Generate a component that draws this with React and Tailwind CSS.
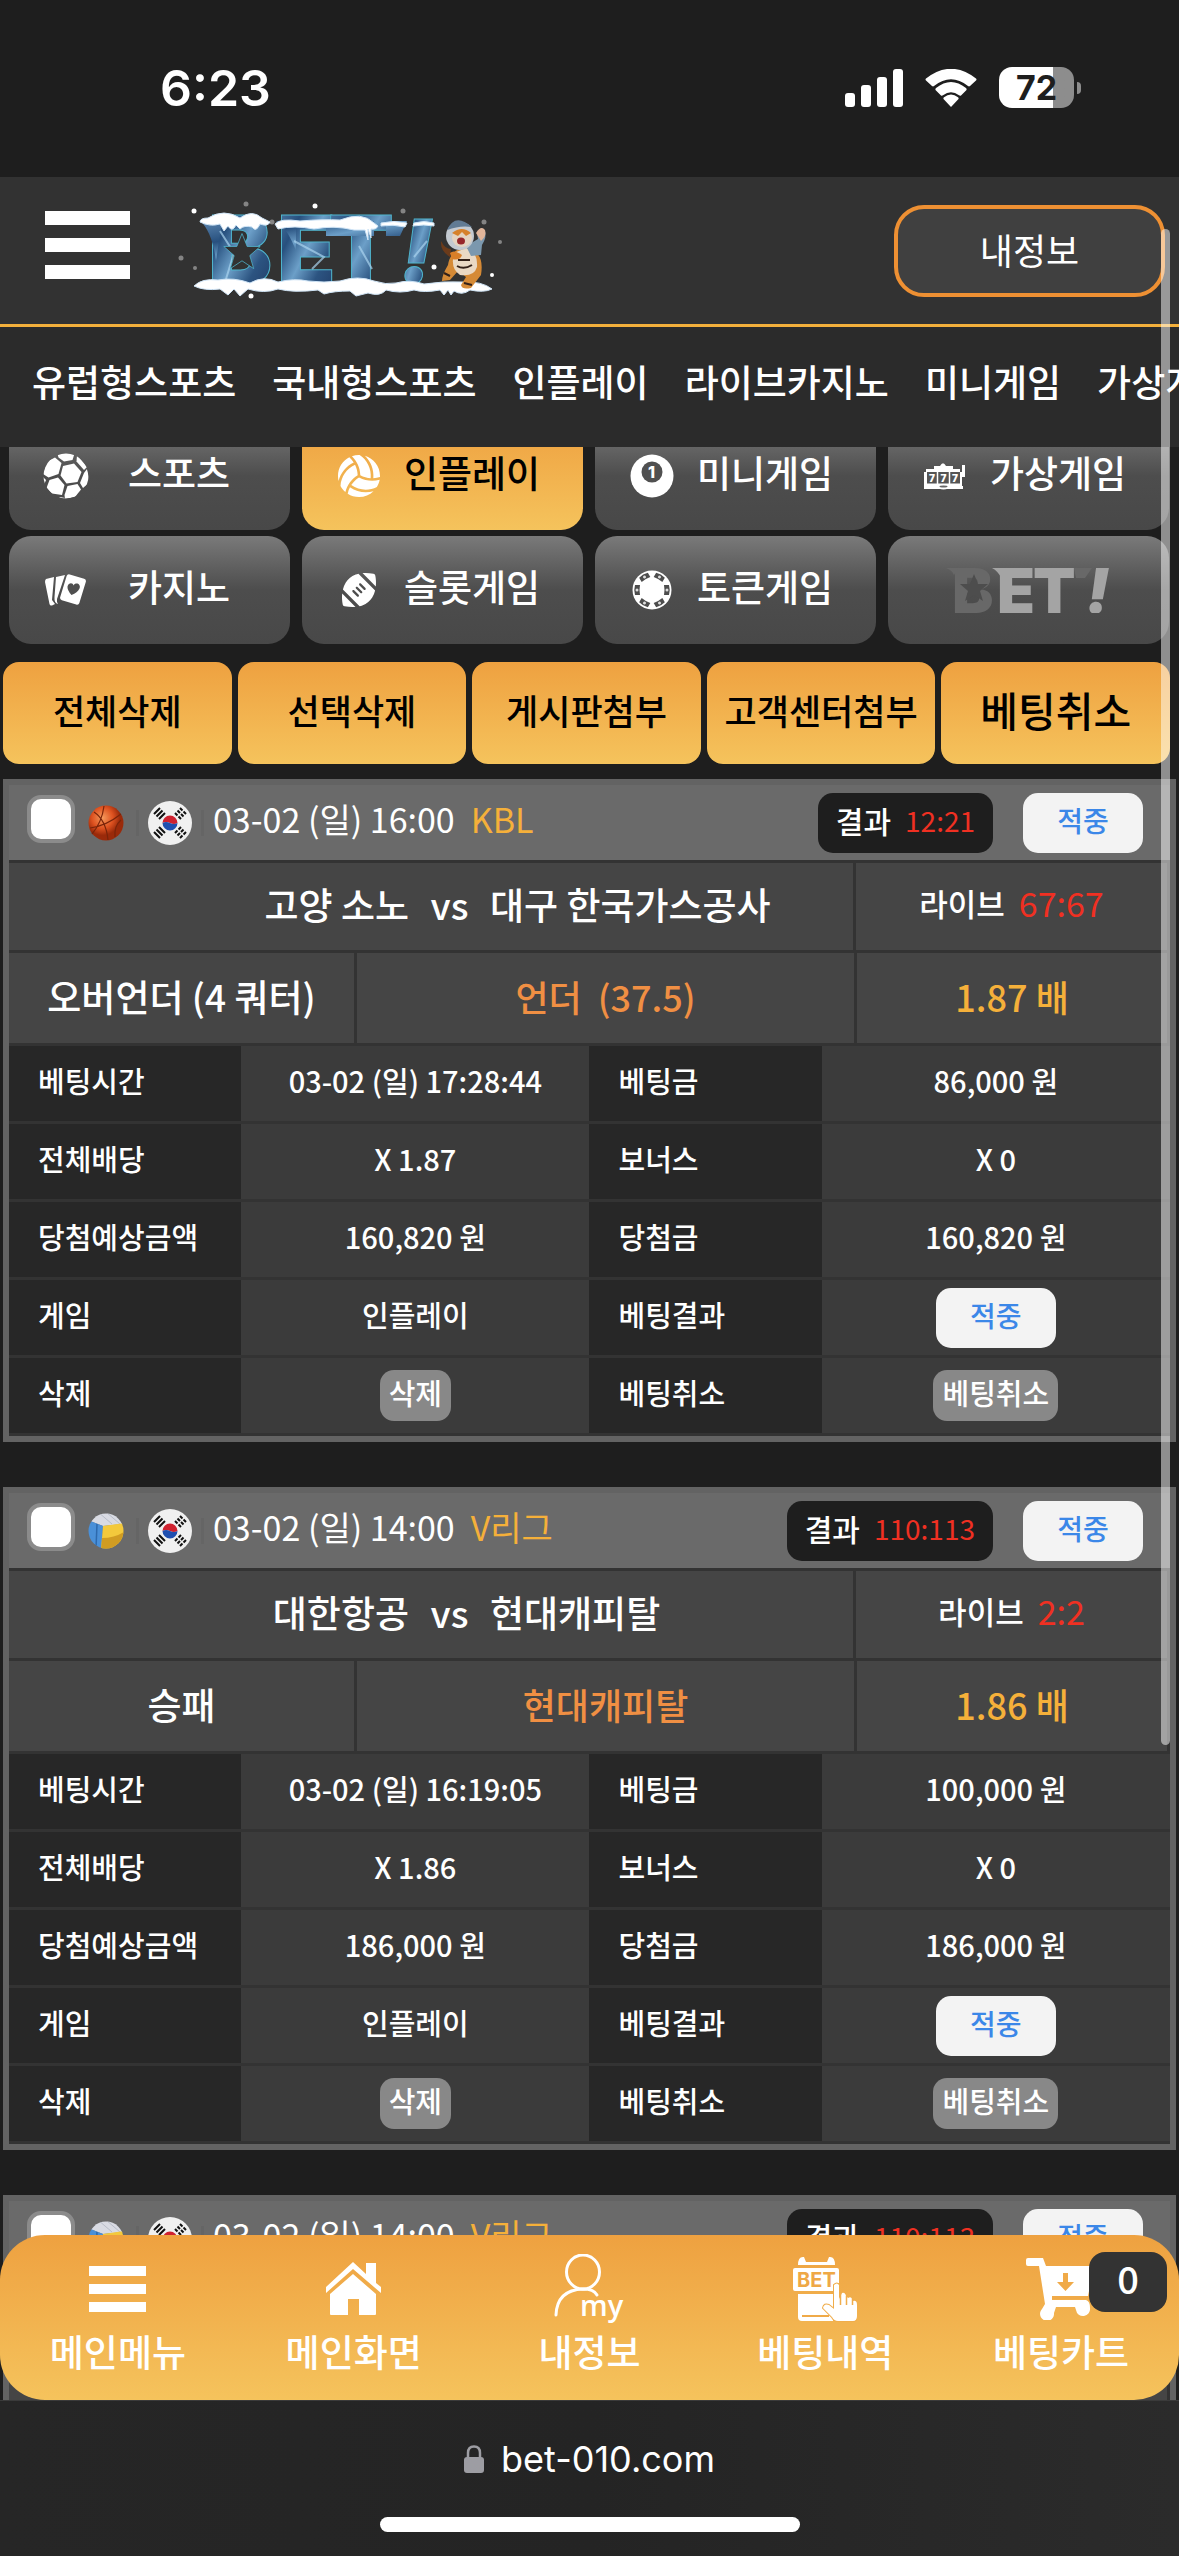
import { FaFootball, FaVolleyball } from 'react-icons/fa6'

const navLinks = ['유럽형스포츠', '국내형스포츠', '인플레이', '라이브카지노', '미니게임', '가상게임']

const actions = [
  { label: '전체삭제' },
  { label: '선택삭제' },
  { label: '게시판첨부' },
  { label: '고객센터첨부' },
  { label: '베팅취소', large: true },
]

const volleyBet = {
  sport: 'volleyball',
  date: '03-02 (일) 14:00',
  league: 'V리그',
  result: '110:113',
  home: '대한항공',
  away: '현대캐피탈',
  live: '2:2',
  market: '승패',
  pick: '현대캐피탈',
  odds: '1.86',
  betTime: '03-02 (일) 16:19:05',
  stake: '100,000 원',
  payout: '186,000 원',
}

const bets = [
  {
    id: 1,
    sport: 'basketball',
    date: '03-02 (일) 16:00',
    league: 'KBL',
    result: '12:21',
    home: '고양 소노',
    away: '대구 한국가스공사',
    live: '67:67',
    market: '오버언더 (4 쿼터)',
    pick: '언더',
    line: '(37.5)',
    odds: '1.87',
    betTime: '03-02 (일) 17:28:44',
    stake: '86,000 원',
    payout: '160,820 원',
  },
  { id: 2, ...volleyBet },
  { id: 3, ...volleyBet },
]

function SoccerIcon() {
  return (
    <svg viewBox="0 0 46 48" className="h-12 w-[46px]">
      <clipPath id="soccer">
        <circle cx="23" cy="24" r="22.5" />
      </clipPath>
      <g clipPath="url(#soccer)" fill="#fff">
        <path d="M20 14 31 11.500 38.500 20 34.500 30 23.500 31.500 17.500 23.500z" />
        <path d="M14 0H32L29.500 8 21 9.500 15.500 5.500z" />
        <path d="M34 3 44 15 41 18 33.500 9.500z" />
        <path d="M44 17 47 30 40 36 37 31 41 21z" />
        <path d="M12 5.500 18.500 11 15.500 22 5.500 25.500 0 22 3 10z" />
        <path d="M6.500 28 15 25.500 21.500 33 19 43 9 41.500 3.500 36z" />
        <path d="M24.500 34 34.500 32 38 37.500 32 45 22 47 21.500 43z" />
        <path d="M0 25 3 28 1 33-1 32z" />
        <path d="M17 45 22 46 20 49 14 47z" />
      </g>
    </svg>
  )
}

function CardsIcon() {
  return (
    <svg viewBox="0 0 42 32" className="h-8 w-[42px]" fill="#fff">
      <path d="M1 5 9 3 7 26 10 30 7 31.500Q5 32 4.500 30L0 8Q0 6 1 5z" />
      <path d="M11 3 20 1 12 25Q11.500 28 13 30Q9 29 9.500 23z" />
      <rect x="18" y="2" width="20" height="27" rx="2.500" transform="rotate(17 28 15.500)" />
      <path d="M28.500 11.500C30.500 7.500 36.500 10 34.500 14.500Q32.500 18.500 26.500 21Q22 16 22.500 12.500C23.500 8.500 28 8.500 28.500 11.500z" fill="#4f4f4f" />
    </svg>
  )
}

function BallIcon() {
  return (
    <svg viewBox="0 0 44 44" className="h-11 w-11">
      <circle cx="22" cy="22" r="21.500" fill="#fff" />
      <circle cx="22" cy="18" r="10.500" fill="#505050" />
      <text x="21.500" y="24" textAnchor="middle" className="font-['Inter',sans-serif] text-base font-extrabold" fill="#fff">1</text>
    </svg>
  )
}

function SlotIcon() {
  return (
    <svg viewBox="0 0 42 28" className="h-7 w-[42px]">
      <path d="M10 4H16Q19-1.500 22 4H29V7H36V10H38V3H41V15H38V24H39V27H0V10H2V7H10z" fill="#fff" />
      <rect x="3" y="10" width="33" height="11.500" fill="#555" />
      <path d="M13.500 10V22M25.500 10V22" stroke="#fff" strokeWidth="1.500" />
      <g className="font-['Inter',sans-serif] text-[10px] font-black" fill="#fff">
        <text x="5" y="19.500">7</text>
        <text x="16.500" y="19.500">7</text>
        <text x="28" y="19.500">7</text>
      </g>
      <ellipse cx="19.500" cy="25" rx="6" ry="2.500" fill="#fff" />
      <ellipse cx="19.500" cy="24.500" rx="4" ry="1" fill="#666" />
    </svg>
  )
}

function ChipIcon() {
  return (
    <svg viewBox="0 0 40 40" className="h-10 w-10">
      <circle cx="20" cy="20" r="19.500" fill="#fff" />
      {[0, 60, 120, 180, 240, 300].map((angle) => (
        <g key={angle} transform={`rotate(${angle} 20 20)`}>
          <path d="M32 15H37Q38.500 20 37 25H32Q33 20 32 15z" fill="#4d4d4d" />
          <circle cx="35" cy="20" r="1.500" fill="#ddd" />
        </g>
      ))}
    </svg>
  )
}

const star = '0,-15 4,-5 14,-5 6,2 9,12 0,6 -9,12 -6,2 -14,-5 -4,-5'

function GreyLogo() {
  return (
    <svg viewBox="0 0 166 46" className="h-[46px] w-[166px]" role="img" aria-label="BET!">
      <g className="font-['Inter',sans-serif] text-[62px] font-black">
        <text x="6" y="46" fill="#686868">B</text>
        <text x="51" y="46" fill="#a4a4a4">E</text>
        <text x="87" y="46" fill="#a4a4a4">T</text>
        <text x="140" y="46" fill="#a4a4a4" className="italic">!</text>
      </g>
      <path d="M0 1H12L8 8Q6 3 0 1M128 1H146L139 11H130z" fill="#686868" />
      <path d="M46 1H56V12Q52 4 46 1z" fill="#a4a4a4" />
      <polygon points={star} transform="translate(28 22)" fill="#4d4d4d" />
    </svg>
  )
}

function WinterLogo() {
  return (
    <svg viewBox="0 0 330 108" className="h-[108px] w-[330px]" role="img" aria-label="BET!">
      <defs>
        <linearGradient id="ice" x1="0" y1="0" x2="1" y2="1">
          <stop offset="0" stopColor="#5c86b0" />
          <stop offset=".3" stopColor="#27507e" />
          <stop offset=".5" stopColor="#6c9fc8" />
          <stop offset=".7" stopColor="#2c5481" />
          <stop offset="1" stopColor="#1d355f" />
        </linearGradient>
      </defs>
      <g fill="url(#ice)" stroke="#4fb3cb" strokeWidth="1" className="font-['Inter',sans-serif] text-[96px] font-black">
        <text x="34" y="94">B</text>
        <text x="103" y="94">E</text>
        <text x="154" y="94">T</text>
        <text x="226" y="92" className="text-[88px] italic">!</text>
      </g>
      <path d="M26 30H48L42 70Q38 40 26 30M102 30H122V60Q114 38 102 30M152 30H200V45H152zM212 30H233L226 45H212z" fill="url(#ice)" />
      <path d="M46 40 60 62 52 88M120 50 150 66 138 78M185 55 198 78M240 66 253 50" stroke="#a9d3ee" strokeWidth="2" fill="none" opacity=".7" />
      <polygon points={star} transform="translate(68 62) scale(1.300)" fill="#323232" stroke="#4fb3cb" strokeWidth=".6" />
      <g fill="#fff" stroke="#cfe4f6" strokeWidth="1">
        <path d="M26 31Q26 27 34 27Q50 17 66 27Q78 18 88 27L96 31Q94 36 86 33Q82 42 78 36Q70 34 66 38L62 34Q58 42 54 35L50 40L46 33Q36 36 26 31z" />
        <path d="M101 33Q106 27 126 30Q150 28 166 29Q188 20 200 32L204 35Q202 39 197 38V47L194 38V49L191 39H180Q160 34 140 38Q120 34 104 38z" />
        <path d="M207 32Q220 29 233 32L231 36Q219 33 207 35zM240 32Q250 29 260 32V35Q250 33 239 35z" />
        <path d="M20 95Q28 87 44 89Q60 86 76 92Q90 84 104 91Q120 87 134 90Q150 92 166 90Q184 84 200 90Q212 94 222 92Q236 88 250 93Q270 90 288 91Q308 90 318 98Q310 102 296 99Q288 105 280 100L277 104L274 99L270 104L266 99Q250 102 240 99Q226 103 212 99Q206 106 194 102L182 105L176 100Q160 100 150 103L144 99Q120 102 104 98Q90 103 74 98L66 105L60 98L54 104L46 98Q30 100 20 95z" />
      </g>
      {/* waving tiger in a parka */}
      <path d="M276 66Q266 60 267 50Q271 58 277 58" fill="#6b3b1b" />
      <path d="M274 74Q268 84 268 90L276 89L284 80L292 86L287 94Q288 99 297 97L307 84Q310 66 300 60L290 56Q276 60 274 74z" fill="#d58a36" />
      <path d="M280 62Q276 78 286 84Q300 86 303 76Q304 60 292 57z" fill="#ead9c4" />
      <path d="M292 55 304 48 303 42Q308 34 311 40Q313 46 308 54L307 64L297 65z" fill="#7b98ae" />
      <path d="M302 42Q307 34 311 39Q313 45 307 50z" fill="#e1b59a" />
      <circle cx="286" cy="45" r="14" fill="#c3c9d0" />
      <path d="M273 39Q281 21 298 36Q286 34 273 39z" fill="#617b94" />
      <ellipse cx="288" cy="47" rx="10" ry="9" fill="#e4d3c0" />
      <path d="M278 42Q288 34 297 42L292 45L288 41L284 45z" fill="#d6812b" />
      <ellipse cx="287" cy="50" rx="4" ry="3.500" fill="#97262a" />
      <path d="M276 62Q280 58 288 64Q286 70 278 68z" fill="#d97f28" />
      <path d="M284 69H296M283 75Q290 79 298 74M270 82L276 85M290 92L298 94" stroke="#332118" strokeWidth="2" fill="none" />
      <g fill="#fff">
        <circle cx="20" cy="20" r="2.500" />
        <circle cx="141" cy="15" r="2.500" />
        <circle cx="260" cy="76" r="2.500" />
        <circle cx="318" cy="84" r="2" />
        <circle cx="77" cy="105" r="2.500" />
        <g opacity=".4">
          <circle cx="72" cy="13" r="2.500" />
          <circle cx="229" cy="20" r="2.500" />
          <circle cx="310" cy="31" r="2.500" />
          <circle cx="98" cy="31" r="2.500" />
          <circle cx="7" cy="67" r="2.500" />
          <circle cx="326" cy="51" r="2" />
          <circle cx="21" cy="77" r="2" />
        </g>
      </g>
    </svg>
  )
}

const menuItems = [
  { label: '스포츠', icon: <SoccerIcon /> },
  { label: '인플레이', icon: <FaVolleyball size={42} />, active: true },
  { label: '미니게임', icon: <BallIcon /> },
  { label: '가상게임', icon: <SlotIcon /> },
  { label: '카지노', icon: <CardsIcon /> },
  { label: '슬롯게임', icon: <FaFootball size={36} /> },
  { label: '토큰게임', icon: <ChipIcon /> },
]

function StatusBar() {
  return (
    <div className="flex h-[177px] shrink-0 items-center justify-between pb-[2px] pl-[160px] pr-[98px] font-['Inter',sans-serif]">
      <span className="text-[50px] font-semibold leading-none">6:23</span>
      <div className="flex items-center gap-[22px]">
        <svg viewBox="0 0 58 38" className="h-[38px] w-[58px]" fill="#fff">
          <rect y="24" width="10" height="14" rx="3" />
          <rect x="16" y="16" width="10" height="22" rx="3" />
          <rect x="32" y="8" width="10" height="30" rx="3" />
          <rect x="48" width="10" height="38" rx="3" />
        </svg>
        <svg viewBox="0 0 52 38" className="h-[38px] w-[52px]" fill="#fff">
          <path d="M26 38 18.500 30Q18 29 19 28.200Q26 23 33 28.200Q34 29 33.500 30z" />
          <path d="M16 26.500 10.500 21Q10 20 11 19Q26 7 41 19Q42 20 41.500 21L36 26.500Q35 27 34 26.300Q26 20 18 26.300Q17 27 16 26.500z" />
          <path d="M7 17 1 11.500Q0 10.500 1 9.500Q26-10 51 9.500Q52 10.500 51 11.500L45 17Q44 17.800 43 17Q26 3.500 9 17Q8 17.800 7 17z" />
        </svg>
        <div className="flex items-center gap-[3px]">
          <div className="flex h-[41px] w-[75px] items-center justify-center rounded-[13px] bg-linear-to-r from-white from-72% to-[#8d8d8d] to-72% text-[34px] font-bold leading-none text-[#1e1e1e]">
            72
          </div>
          <div className="h-3 w-1 rounded-r-full bg-[#8d8d8d]" />
        </div>
      </div>
    </div>
  )
}

function Header() {
  return (
    <>
      <header className="flex h-[150px] shrink-0 items-center justify-between border-b-[3px] border-[#f3b03c] bg-[#323232] pl-[45px] pr-[14px]">
        <div className="flex items-center gap-[44px] pb-3">
          <button aria-label="메뉴" className="flex w-[85px] flex-col gap-[13px]">
            <span className="h-[14px] bg-white" />
            <span className="h-[14px] bg-white" />
            <span className="h-[14px] bg-white" />
          </button>
          <a href="#home">
            <WinterLogo />
          </a>
        </div>
        <button className="h-[92px] w-[271px] rounded-[30px] border-4 border-[#ee9033] bg-[#404040] pb-1 text-[36px] leading-none">
          내정보
        </button>
      </header>
      <nav className="flex h-[120px] shrink-0 items-center gap-9 overflow-hidden whitespace-nowrap bg-[#2b2b2b] pb-3 pl-8 text-[37px] font-medium leading-none">
        {navLinks.map((link) => (
          <a key={link} href="#category">{link}</a>
        ))}
      </nav>
    </>
  )
}

function GameMenu() {
  return (
    <div className="-mt-[25px] grid grid-cols-4 gap-x-3 gap-y-[6px] pl-[9px] pr-[10px]">
      {menuItems.map((item) => (
        <button
          key={item.label}
          className={`flex h-[108px] items-center rounded-[22px] pl-[29px] pr-[26px] text-[37px] font-medium leading-none ${
            item.active
              ? 'bg-linear-to-b from-[#eea140] to-[#f5c35c] text-black'
              : 'bg-linear-to-b from-[#7a7a7a] via-[#4d4d4d] to-[#484848]'
          }`}
        >
          <span className="flex w-14 shrink-0 justify-center text-white">{item.icon}</span>
          <span className="flex-1 whitespace-nowrap pb-2 text-center">{item.label}</span>
        </button>
      ))}
      <button className="flex h-[108px] items-center justify-center rounded-[22px] bg-linear-to-b from-[#7a7a7a] via-[#4d4d4d] to-[#484848]">
        <GreyLogo />
      </button>
    </div>
  )
}

function ActionBar() {
  return (
    <div className="mt-[18px] grid grid-cols-5 gap-[6px] pl-[3px] pr-[9px]">
      {actions.map((action) => (
        <button
          key={action.label}
          className={`h-[102px] whitespace-nowrap rounded-2xl bg-linear-to-b from-[#eea140] to-[#f5c35c] pb-2 font-medium leading-none text-black ${
            action.large ? 'text-[41px]' : 'text-[35px]'
          }`}
        >
          {action.label}
        </button>
      ))}
    </div>
  )
}

function SportBall({ sport }) {
  if (sport === 'basketball') {
    return (
      <svg viewBox="0 0 36 38" className="h-[38px] w-9">
        <radialGradient id="basket" cx=".4" cy=".35">
          <stop offset="0" stopColor="#f59a5c" />
          <stop offset=".6" stopColor="#de5220" />
          <stop offset="1" stopColor="#9a2a0a" />
        </radialGradient>
        <circle cx="18" cy="19" r="17.500" fill="url(#basket)" />
        <path d="M2 24Q18 22 33 10M6 8Q18 16 20 36M16 2Q14 18 4 30M33 16Q26 22 27 33" stroke="#7a2409" strokeWidth="1.200" fill="none" />
      </svg>
    )
  }
  return (
    <svg viewBox="0 0 36 38" className="h-[38px] w-9">
      <clipPath id="volley">
        <circle cx="18" cy="19" r="17.500" />
      </clipPath>
      <g clipPath="url(#volley)">
        <path d="M0 0H36V12L15 14 2 9z" fill="#d9dbe3" />
        <path d="M10 0 24 12M18 0 32 12" stroke="#b7bcc8" strokeWidth="1" />
        <path d="M0 8 15 14 14 38H0z" fill="#4a90d8" />
        <path d="M9 12 8 36" stroke="#2d69ad" strokeWidth="1.500" />
        <path d="M15 14 36 11V38H13z" fill="#f3c93c" />
        <path d="M14 26Q26 26 36 20V38H13z" fill="#d19c22" />
      </g>
    </svg>
  )
}

function KoreaFlag() {
  return (
    <svg viewBox="0 0 44 44" className="h-11 w-11">
      <circle cx="22" cy="22" r="22" fill="#f0f0f0" />
      <path d="M14.500 22A7.500 7.500 0 0 1 29.500 22Q26 24 22 22T14.500 22z" fill="#cf2230" />
      <path d="M14.500 22A7.500 7.500 0 0 0 29.500 22Q26 24 22 22T14.500 22z" fill="#1f4fb0" />
      <g stroke="#111" strokeWidth="2">
        <path d="M7 13 13 7M9.500 15.500 15.500 9.500M12 18 18 12" transform="translate(-1 0)" />
        <path d="M31 7 37 13M28.500 9.500 34.500 15.500M26 12 32 18" strokeDasharray="3.500 1.500" transform="translate(1 0)" />
        <path d="M7 31 13 37M9.500 28.500 15.500 34.500M12 26 18 32" transform="translate(-1 0)" />
        <path d="M31 37 37 31M28.500 34.500 34.500 28.500M26 32 32 26" strokeDasharray="3.500 1.500" transform="translate(1 0)" />
      </g>
    </svg>
  )
}

function HitBadge() {
  return (
    <span className="inline-flex h-[60px] w-[120px] items-center justify-center rounded-[15px] bg-[#f3f3f3] pb-[6px] align-middle text-[28px] font-medium leading-none text-[#3b87e8]">
      적중
    </span>
  )
}

function SmallButton({ children }) {
  return (
    <button className="inline-flex h-[51px] items-center rounded-[14px] bg-[#888] px-[9px] pb-[6px] align-middle text-[29px] font-medium leading-none">
      {children}
    </button>
  )
}

function BetCard({ bet }) {
  const rows = [
    ['베팅시간', bet.betTime, '베팅금', bet.stake],
    ['전체배당', `X ${bet.odds}`, '보너스', 'X 0'],
    ['당첨예상금액', bet.payout, '당첨금', bet.payout],
    ['게임', '인플레이', '베팅결과', <HitBadge key="hit" />],
    ['삭제', <SmallButton key="delete">삭제</SmallButton>, '베팅취소', <SmallButton key="cancel">베팅취소</SmallButton>],
  ]

  return (
    <article className="shrink-0 border-[6px] border-[#636363] bg-[#333] leading-none">
      <div className="flex h-[75px] items-center bg-[#6a6a6a] pl-[18px] pr-[27px]">
        <input
          type="checkbox"
          aria-label={`${bet.home} vs ${bet.away}`}
          className="mb-2 size-12 appearance-none rounded-[14px] border-4 border-[#8b8b8b] bg-white"
        />
        <div className="ml-[13px]"><SportBall sport={bet.sport} /></div>
        <span className="ml-3 h-[26px] w-[3px] bg-[#656565]" />
        <div className="ml-[9px]"><KoreaFlag /></div>
        <span className="ml-[9px] h-[26px] w-[3px] bg-[#656565]" />
        <div className="ml-[9px] flex gap-4 pb-2 text-[34px]">
          <span>{bet.date}</span>
          <span className="text-[#f5b03a]">{bet.league}</span>
        </div>
        <div className="ml-auto flex h-[60px] items-center gap-[14px] rounded-[15px] bg-[#1e1e1e] px-[18px] pb-[6px]">
          <span className="text-[30px] font-medium">결과</span>
          <span className="text-[28px] text-[#f03022]">{bet.result}</span>
        </div>
        <div className="ml-[30px] flex"><HitBadge /></div>
      </div>

      <div className="mt-[3px] flex h-[87px] gap-[3px] pr-[3px] text-[37px] font-medium">
        <div className="flex flex-[844] items-center bg-[#454545] pb-1">
          <span className="w-[400px] text-right">{bet.home}</span>
          <span className="w-[81px] text-center">vs</span>
          <span>{bet.away}</span>
        </div>
        <div className="flex flex-[311] items-center justify-center gap-[14px] bg-[#454545] pb-2">
          <span className="text-[31px]">라이브</span>
          <span className="text-[34px] font-normal text-[#f03022]">{bet.live}</span>
        </div>
      </div>

      <div className="mt-[3px] flex h-[90px] gap-[3px] pr-[3px] text-[37px] font-medium">
        <div className="flex flex-[345] items-center justify-center bg-[#454545] pb-1">{bet.market}</div>
        <div className="flex flex-[497] items-center justify-center gap-4 bg-[#454545] pb-1 text-[36px] text-[#f08f43]">
          <span>{bet.pick}</span>
          {bet.line && <span>{bet.line}</span>}
        </div>
        <div className="flex flex-[310] items-center justify-center bg-[#454545] pb-1 text-[36px] text-[#f5b03a]">{bet.odds} 배</div>
      </div>

      <table className="mt-[3px] w-full table-fixed border-separate border-spacing-0 text-[29px]">
        <colgroup>
          <col className="w-[20%]" />
          <col className="w-[30%]" />
          <col className="w-[20%]" />
          <col className="w-[30%]" />
        </colgroup>
        <tbody>
          {rows.map(([labelA, valueA, labelB, valueB]) => (
            <tr key={labelA} className="h-[78px]">
              <th scope="row" className="border-b-[3px] border-[#333] bg-[#272727] pb-[6px] pl-[29px] text-left font-medium">{labelA}</th>
              <td className={`border-b-[3px] border-[#333] bg-[#3b3b3b] text-center font-medium ${typeof valueA === 'string' ? 'pb-[6px]' : ''}`}>{valueA}</td>
              <th scope="row" className="border-b-[3px] border-[#333] bg-[#272727] pb-[6px] pl-[29px] text-left font-medium">{labelB}</th>
              <td className={`border-b-[3px] border-[#333] bg-[#3b3b3b] text-center font-medium ${typeof valueB === 'string' ? 'pb-[6px]' : ''}`}>{valueB}</td>
            </tr>
          ))}
        </tbody>
      </table>
    </article>
  )
}

function MenuIcon() {
  return (
    <svg viewBox="0 0 57 46" className="h-[46px] w-[57px]" fill="#fff">
      <path d="M0 0H57V10H0zM0 18H57V28H0zM0 36H57V46H0z" />
    </svg>
  )
}

function HomeIcon() {
  return (
    <svg viewBox="0 0 56 54" className="h-[54px] w-14" fill="#fff">
      <path d="M27 0 40 12V1H50V21L55 25V31L27 7 0 31V25z" />
      <path d="M27 12 50 32V52Q50 53 49 53H33V37H22V53H5Q4 53 4 52V32z" />
    </svg>
  )
}

function MyIcon() {
  return (
    <svg viewBox="0 0 70 70" className="h-[70px] w-[70px]">
      <ellipse cx="29" cy="18" rx="16.500" ry="17" stroke="#fff" strokeWidth="3" fill="none" />
      <path d="M2 61Q3 36 29 35Q40 35 43 41" stroke="#fff" strokeWidth="3" fill="none" strokeLinecap="round" />
      <text x="26" y="62" fill="#fff" className="font-['Open_Sans',sans-serif] text-[29px] font-semibold">my</text>
    </svg>
  )
}

function BetIcon() {
  return (
    <svg viewBox="0 0 64 66" className="h-[66px] w-16">
      <path d="M5 9Q5 0 11 1L13 6H34L36 1Q42 0 42 9zM2 12H44Q46 12 46 14V27L41 30V35H2Q0 35 0 33V14Q0 12 2 12zM5 38H40V65H9Q5 65 5 61z" fill="#fff" />
      <path d="M9 60H36" stroke="#f0aa48" strokeWidth="2" />
      <text x="4" y="31" fill="#efa846" className="font-['Inter',sans-serif] text-[20px] font-bold">BET</text>
      <path d="M41 29Q44 26 46 29V43L49 37Q52 36 53 40L55 42Q58 40 59 43L60 45Q64 44 64 49V60Q64 65 60 65H45Q41 65 39 61L30 52Q31 47 36 49L41 53z" fill="#fff" stroke="#f0ad4b" strokeWidth="2" paintOrder="stroke" />
      <path d="M47.500 36V49M53.500 40V49M59.500 43V49" stroke="#f0ad4b" strokeWidth="1.500" />
    </svg>
  )
}

function CartIcon() {
  return (
    <svg viewBox="0 0 70 62" className="h-[62px] w-[70px]">
      <path d="M2 0H17L20 8H68L62 38H26V42H60Q64 43 64 50A7 7 0 1 1 50 52L49 49H30L28 55A7 7 0 1 1 16 51L19 46 13 8H2Q0 8 0 6V2Q0 0 2 0z" fill="#fff" />
      <path d="M37 15H42V24H48L39.500 33 31 24H37zM26 38H64V41H26z" fill="#f0aa48" />
    </svg>
  )
}

const tabs = [
  { label: '메인메뉴', icon: <MenuIcon /> },
  { label: '메인화면', icon: <HomeIcon /> },
  { label: '내정보', icon: <MyIcon /> },
  { label: '베팅내역', icon: <BetIcon /> },
  { label: '베팅카트', icon: <CartIcon />, count: '0' },
]

function TabBar() {
  return (
    <nav className="absolute inset-x-0 bottom-0 grid h-[165px] grid-cols-5 rounded-[45px] bg-linear-to-b from-[#eea140] to-[#f5c35c]">
      {tabs.map((tab) => (
        <a key={tab.label} href="#tab" className="relative flex flex-col items-center pt-[18px]">
          <span className="flex h-[72px] items-center">{tab.icon}</span>
          <span className="mt-2 text-[37px] font-medium leading-none">{tab.label}</span>
          {tab.count && (
            <span className="absolute right-3 top-[17px] flex h-[60px] w-[78px] items-center justify-center rounded-2xl bg-[#333] pb-2 text-[38px] font-medium leading-none">
              {tab.count}
            </span>
          )}
        </a>
      ))}
    </nav>
  )
}

function BrowserBar() {
  return (
    <footer className="flex h-[156px] shrink-0 flex-col items-center border-t border-[#3a3a3a] bg-linear-to-r from-[#262626] via-[#242424] to-[#2b2b2b]">
      <div className="flex h-[116px] items-center gap-[17px]">
        <svg viewBox="0 0 20 28" className="h-7 w-5">
          <rect y="12" width="20" height="16" rx="3" fill="#9d9da3" />
          <path d="M4 14V8Q4 1.500 10 1.500T16 8V14" stroke="#9d9da3" strokeWidth="2.500" fill="none" />
        </svg>
        <span className="font-['Inter',sans-serif] text-[36px] leading-none">bet-010.com</span>
      </div>
      <div className="h-[15px] w-[420px] rounded-full bg-white" />
    </footer>
  )
}

export default function App() {
  return (
    <div className="relative flex h-screen flex-col overflow-hidden bg-[#1e1e1e] font-['Noto_Sans_CJK_KR','Noto_Sans',sans-serif] text-white">
      <StatusBar />
      <Header />
      <div className="relative flex min-h-0 flex-1 flex-col">
        <main className="min-h-0 flex-1 overflow-hidden">
          <GameMenu />
          <ActionBar />
          <div className="mt-[15px] flex flex-col gap-[45px] px-[3px]">
            {bets.map((bet) => (
              <BetCard key={bet.id} bet={bet} />
            ))}
          </div>
        </main>
        <TabBar />
      </div>
      <BrowserBar />
      {/* overlay scroll thumb */}
      <div className="absolute right-[9px] top-[229px] h-[1516px] w-[9px] rounded-full bg-white/50" />
    </div>
  )
}
